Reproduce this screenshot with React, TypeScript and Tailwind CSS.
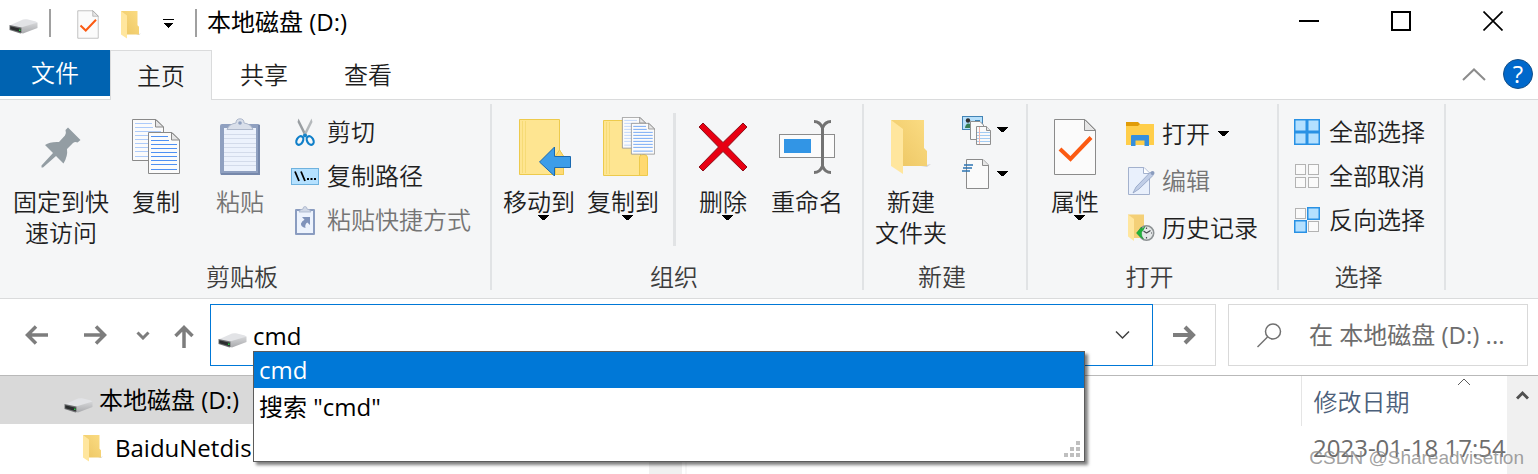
import type { ReactNode } from 'react';

type ChildrenProps = {
  children: ReactNode;
};

type LargeButtonProps = {
  icon: ReactNode;
  lines: string[];
  wide?: boolean;
  menu?: boolean;
  disabled?: boolean;
};

type SmallButtonProps = {
  icon: ReactNode;
  label: string;
  tall?: boolean;
  menu?: boolean;
  disabled?: boolean;
};

/* ---------- Icons ---------- */

function DriveIcon() {
  return (
    <svg width="29" height="17" viewBox="0 0 29 17" className="shrink-0">
      <defs>
        <linearGradient id="driveSide" x1="0" y1="0" x2="0" y2="1">
          <stop offset="0" stopColor="#d6d7d9" />
          <stop offset="1" stopColor="#a9aaad" />
        </linearGradient>
      </defs>
      <path d="M0.500 6.500 L14 0.500 Q16 0 18 0.300 L27 2.500 L28.500 4 L12 9.500 Z" fill="#e2e3e6" />
      <path d="M12 8.500 L28.500 3.500 V9 L14 14.500 L12 14 Z" fill="url(#driveSide)" />
      <path d="M0.500 6 L12.500 8.500 V14 L11.500 14.500 L0.500 11 Z" fill="#6f7173" />
      <path d="M1.300 7.200 L11.800 9.800 V13.300 L1.300 10.300 Z" fill="#2b2d2e" />
      <rect x="10" y="10.500" width="1.500" height="1.500" fill="#27cf45" />
    </svg>
  );
}

function Caret() {
  return (
    <svg width="11" height="6" viewBox="0 0 11 6" className="shrink-0" shapeRendering="crispEdges">
      <path d="M0 0 H11 L6.5 5 H4.5 Z" fill="#000" />
    </svg>
  );
}

function FolderIcon({ width, height }: { width: number; height: number }) {
  return (
    <svg width={width} height={height} viewBox="0 0 40 55" className="shrink-0" preserveAspectRatio="none">
      <defs>
        <linearGradient id="folderBack" x1="0" y1="1" x2="1" y2="0">
          <stop offset="0" stopColor="#ecc562" />
          <stop offset="1" stopColor="#fbdc83" />
        </linearGradient>
      </defs>
      <path d="M30 46 L40 44 L36 47 Z" fill="#d5d5d5" />
      <path d="M0 0 H33 V28 L36 31 V46 H8 Z" fill="url(#folderBack)" />
      <path d="M0 0 L12 9 V54 L0 46 Z" fill="#ffe69e" />
    </svg>
  );
}

function CheckDocIcon({ width, height }: { width: number; height: number }) {
  return (
    <svg width={width} height={height} viewBox="0 0 44 58" className="shrink-0">
      <path d="M1.5 1.5 H32 L42.5 12 V56.5 H1.5 Z" fill="#fbfbfb" stroke="#8b8b8b" />
      <path d="M31.5 1.5 V12.5 H42.5 Z" fill="#e6e6e6" stroke="#8b8b8b" />
      <path d="M7 31 L17.5 41 L38 19.500" fill="none" stroke="#fb5a12" strokeWidth="4" />
    </svg>
  );
}

function PinIcon() {
  return (
    <svg width="40" height="41" viewBox="0 0 40 41">
      <path
        d="M27 0.5 L39.5 13 L36.5 15.5 Q34 14.5 32 16 L26 22 Q27 29 22.5 36.5 L15 29 L2 40.5 H0.5 V38.5 L12 26 L4 18 Q9 14.5 18 15 L24 8.5 Q25.5 6 24.5 3 Z"
        fill="#939da3"
      />
    </svg>
  );
}

function PageLines({ x, y, faded }: { x: number; y: number; faded?: boolean }) {
  const color = faded ? '#adcbfa' : '#4e90f3';
  return (
    <g transform={`translate(${x} ${y})`}>
      <path d="M0.5 0.5 H24 L31.5 8 V41.5 H0.5 Z" fill="#fbfbfb" stroke="#898989" />
      <path d="M23.5 0.5 V8 H31.5 Z" fill="#e6e6e6" stroke="#898989" />
      <path
        d="M3 4.5 H20 M3 8.5 H21 M3 12.5 H29 M3 16.5 H29 M3 20.5 H29 M3 24.5 H29 M3 28.5 H29 M3 32.5 H29 M3 37.5 H29"
        stroke={color}
      />
    </g>
  );
}

function CopyIcon() {
  return (
    <svg width="48" height="58" viewBox="0 -1 48 58">
      <PageLines x={0} y={0} faded />
      <PageLines x={16} y={13} />
    </svg>
  );
}

function PasteIcon() {
  return (
    <svg width="40" height="58" viewBox="0 0 40 58">
      <rect x="0" y="6" width="40" height="51" rx="2" fill="#8fa0c0" />
      <path d="M39 7 V56 H1" fill="none" stroke="#7688ab" strokeWidth="2" />
      <rect x="4" y="10" width="32" height="43" fill="#ecf2fc" />
      <path d="M4 16.500 H36 M4 20.5 H36 M4 25.500 H36 M4 29.5 H36 M4 34.500 H36 M4 38.5 H36 M4 43.500 H36 M4 47.5 H36" stroke="#d3dbea" />
      <path d="M7 11.5 Q9 6 16 5 Q16 0.8 20 0.8 Q24 0.8 24 5 Q31 6 33 11.5 Z" fill="#d9dfea" stroke="#aeb8cb" />
      <circle cx="20" cy="5" r="1.8" fill="#8fa0c0" />
    </svg>
  );
}

function ScissorsIcon() {
  return (
    <svg width="20" height="29" viewBox="0 0 20 29">
      <path d="M3.5 0.5 L12 17.5 L10 19 L2.5 4 Z" fill="#999ea2" />
      <path d="M16.5 0.5 L8 17.5 L10 19 L17.5 4 Z" fill="#b5b9bc" />
      <ellipse cx="4.8" cy="22.5" rx="3.1" ry="4.6" transform="rotate(28 4.8 22.5)" fill="none" stroke="#0f7fc9" strokeWidth="2.2" />
      <ellipse cx="15.2" cy="22.5" rx="3.1" ry="4.6" transform="rotate(-28 15.2 22.5)" fill="none" stroke="#0f7fc9" strokeWidth="2.2" />
      <circle cx="10" cy="17.5" r="2" fill="#1583c8" />
    </svg>
  );
}

function PathIcon() {
  return (
    <svg width="28" height="17" viewBox="0 0 28 17">
      <rect x="0.5" y="0.5" width="27" height="16" fill="#b5e1ff" stroke="#6fb2de" />
      <path d="M4 3.5 L8 13 M10 3.5 L14 13" stroke="#000" strokeWidth="1.8" />
      <path d="M16 10 h2 v2 h-2 Z M19.5 10 h2 v2 h-2 Z M23 10 h2 v2 h-2 Z" fill="#000" />
    </svg>
  );
}

function ShortcutIcon() {
  return (
    <svg width="20" height="29" viewBox="0 0 20 29">
      <rect x="0" y="3" width="20" height="26" rx="1" fill="#8a9cc0" />
      <rect x="2" y="5" width="16" height="22" fill="#edf3fd" />
      <path d="M4 6 Q5 3 8 3 Q8 0.5 10 0.5 Q12 0.5 12 3 Q15 3 16 6 Z" fill="#d0d8e6" stroke="#a7b3c9" strokeWidth="0.8" />
      <path d="M7 11 H15 V19 L12.3 16.5 Q9.5 18.5 10.5 22 Q5.5 20.5 6 17.5 Q7 15 9.5 13.7 Z" fill="#8093bb" />
    </svg>
  );
}

function MoveToIcon() {
  return (
    <svg width="64" height="58" viewBox="-12 -1 64 58">
      <path d="M0.5 0.5 H40.5 V31 L44.5 38 V55.5 H0.5 Z" fill="#fee591" stroke="#edca4c" />
      <path d="M3.5 2 V54 M6.5 2 V54" stroke="#f6db76" />
      <path d="M36.500 55.500 V37 L40.500 31 L44.500 37 V55.500 Z" fill="#ffda75" stroke="#edca4c" />
      <path d="M20.500 43 L35.5 28 V37.5 H51.500 V48.5 H35.5 V57 Z" fill="#3d9de8" stroke="#1a69b0" />
    </svg>
  );
}

function CopyToIcon() {
  return (
    <svg width="64" height="60" viewBox="-12 0 64 60">
      <path d="M0.5 3.5 H37.5 V58.5 H0.5 Z" fill="#fee591" stroke="#edca4c" />
      <path d="M3.5 5 V57 M6.5 5 V57" stroke="#f6db76" />
      <path d="M36.5 58.5 V41 Q36.5 37.5 41 37.5 Q44.5 37.5 44.5 41 V58.5 Z" fill="#ffd970" stroke="#edca4c" />
      <g transform="translate(19 0) scale(0.75)">
        <PageLines x={0} y={0} faded />
      </g>
      <g transform="translate(28 6) scale(0.75)">
        <PageLines x={0} y={0} />
      </g>
    </svg>
  );
}

function DeleteIcon() {
  return (
    <svg width="50" height="50" viewBox="0 0 50 50">
      <path
        d="M5 1 L25 20.5 L45 1 L49 5 L29.5 25 L49 45 L45 49 L25 29.5 L5 49 L1 45 L20.5 25 L1 5 Z"
        fill="#e80012"
        stroke="#8e0d18"
      />
    </svg>
  );
}

function RenameIcon() {
  return (
    <svg width="56" height="54" viewBox="0 0 56 54">
      <rect x="0.5" y="14.5" width="55" height="23" fill="#fbfbfb" stroke="#8c8c8c" />
      <rect x="5" y="19" width="27" height="14" fill="#3295e5" />
      <path
        d="M35 1.500 Q41 1.500 43.500 8 Q46 1.500 52 1.500 M43.500 7 V47 M35 52.500 Q41 52.500 43.500 46 Q46 52.500 52 52.500"
        fill="none"
        stroke="#737373"
        strokeWidth="3"
      />
    </svg>
  );
}

function NewItemIcon() {
  return (
    <svg width="29" height="29" viewBox="0 0 29 29">
      <rect x="0.5" y="0.5" width="20" height="13" fill="#b7e0fb" stroke="#4384b5" />
      <circle cx="6" cy="4.5" r="2.2" fill="#303030" />
      <path d="M3 12 Q3.500 7.500 6.5 7.500 Q9 7.500 9 12 Z" fill="#367e55" />
      <path d="M13 4.500 H18" stroke="#4384b5" />
      <path d="M8.5 5.5 H18 L21.5 9 V23.5 H8.5 Z" fill="#fafafa" stroke="#8f8f8f" />
      <path d="M14.5 10.5 H24.5 L28.5 14.5 V28.5 H14.5 Z" fill="#fafafa" stroke="#8f8f8f" />
      <path d="M24.5 10.5 V14.5 H28.5" fill="#e6e6e6" stroke="#8f8f8f" />
      <path d="M15 16.5 H28 M15 19.5 H28 M15 22.5 H28 M15 25.5 H28" stroke="#a3ccf3" />
      <path d="M17.5 11 V28" stroke="#f2b5ab" />
    </svg>
  );
}

function EasyAccessIcon() {
  return (
    <svg width="29" height="30" viewBox="0 0 29 30">
      <path d="M4.5 0.500 H21 L26.5 6 V29.5 H4.5 Z" fill="#fafafa" stroke="#8b8b8b" />
      <path d="M20.500 0.500 V6.5 H26.5" fill="#e6e6e6" stroke="#8b8b8b" />
      <path d="M2 6 H11 M1 9 H10 M0 12 H8" stroke="#2d74b3" strokeWidth="1.6" />
    </svg>
  );
}

function OpenIcon() {
  return (
    <svg width="28" height="24" viewBox="0 0 28 24">
      <path d="M0 0 H12 L14 2 V6 H0 Z" fill="#e19c08" />
      <path d="M0 4 H12 L14 2 H28 V23 H0 Z" fill="#ffce4a" />
      <path d="M5 14 Q5 13 6 13 H22 Q23 13 23 14 V24 H18.500 V18.500 H9.500 V24 H5 Z" fill="#368fdc" />
    </svg>
  );
}

function EditIcon() {
  return (
    <svg width="30" height="28" viewBox="0 0 30 28" className="shrink-0">
      <path d="M3.500 0.5 H19 L24.500 6 V27.500 H3.500 Z" fill="#e9f0fc" stroke="#a3b1cd" />
      <path d="M18.500 0.5 V6.500 H24.500" fill="#fff" stroke="#a3b1cd" />
      <path d="M25.500 5 L28.500 8 L14 22 L8 26 L11 20 Z" fill="#c0cde6" stroke="#8fa1c3" strokeWidth="0.8" />
      <circle cx="27.500" cy="6" r="2" fill="#8a9cbe" />
    </svg>
  );
}

function HistoryIcon() {
  return (
    <svg width="30" height="28" viewBox="0 0 30 28" className="shrink-0">
      <path d="M3 0.5 H19 V24 H7 Z" fill="#f4d077" />
      <path d="M3 0.5 L9 5 V27 L3 22.500 Z" fill="#ffe69e" />
      <circle cx="21.500" cy="19" r="7.200" fill="#e4e7e8" stroke="#8d9294" strokeWidth="1.600" />
      <path d="M21.500 19 L25.500 16.500 M21.500 19 L18.500 17 M21.500 13.500 V15 M21.500 23 V24.500 M26 19 H27" stroke="#4b4f52" strokeWidth="1.200" />
      <path d="M11.500 19 L16.500 13 V15 Q18.500 14 20 12.500 Q18 17 16.500 18 V19 Q16 22 18.500 25 Q14 22.500 11.500 19 Z" fill="#1fb53c" stroke="#128a2b" strokeWidth="0.500" />
    </svg>
  );
}

function GridIcon({ selected }: { selected: boolean[] }) {
  return (
    <svg width="26" height="26" viewBox="0 0 26 26">
      {selected.map((on, i) => (
        <rect
          key={i}
          x={(i % 2) * 13 + (on ? 0.75 : 1.5)}
          y={Math.floor(i / 2) * 13 + (on ? 0.75 : 1.5)}
          width={on ? 11.5 : 10}
          height={on ? 11.5 : 10}
          fill={on ? '#b4e0ff' : '#fafafa'}
          stroke={on ? '#2991e4' : '#b3b3b3'}
          strokeWidth={on ? 1.5 : 1}
        />
      ))}
    </svg>
  );
}

/* ---------- Ribbon parts ---------- */

function LargeButton({ icon, lines, wide, menu, disabled }: LargeButtonProps) {
  return (
    <button
      type="button"
      disabled={disabled}
      className={`flex flex-col items-center pt-[18px] ${wide ? 'w-[106px]' : 'w-[84px]'} ${disabled ? 'text-[#757575]' : 'text-[#1f1f1f]'}`}
    >
      <span className="mb-3 flex h-[58px] items-center justify-center">{icon}</span>
      {lines.map((line) => (
        <span key={line} className="mb-[3px] leading-7 whitespace-nowrap last:mb-0">
          {line}
        </span>
      ))}
      {menu && (
        <span className="-mt-1 pl-2">
          <Caret />
        </span>
      )}
    </button>
  );
}

function SmallButton({ icon, label, tall, menu, disabled }: SmallButtonProps) {
  return (
    <button
      type="button"
      disabled={disabled}
      className={`flex items-center gap-2 leading-7 whitespace-nowrap ${tall ? 'h-[47px]' : 'h-11'} ${disabled ? 'text-[#757575]' : 'text-[#1f1f1f]'}`}
    >
      <span className="flex w-7 justify-center">{icon}</span>
      {label}
      {menu && <Caret />}
    </button>
  );
}

function Group({ label, children }: ChildrenProps & { label: string }) {
  return (
    <section className="flex flex-col pb-[7px]">
      <div className="flex h-[163px]">{children}</div>
      <h2 className="pr-1.5 text-center leading-7 text-[#3d3d3d]">{label}</h2>
    </section>
  );
}

function Divider() {
  return <div className="mt-1 mb-2 w-0.5 bg-[#e1e3e5]" />;
}

/* ---------- Window sections ---------- */

function TitleBar() {
  return (
    <header className="flex h-[50px] items-start text-black">
      <div className="flex h-[46px] items-center pl-[9px]">
        <span className="pt-2">
          <DriveIcon />
        </span>
        <span className="ml-[11px] h-7 w-0.5 bg-[#a0a0a0]" />
        <button type="button" aria-label="属性" className="ml-[26px] pt-0.5">
          <CheckDocIcon width={22} height={29} />
        </button>
        <button type="button" aria-label="新建文件夹" className="ml-[22px] pt-1">
          <FolderIcon width={20} height={28} />
        </button>
        <button type="button" aria-label="自定义快速访问工具栏" className="ml-[22px]">
          <svg width="11" height="9" viewBox="0 0 11 9" shapeRendering="crispEdges">
            <path d="M0 0 H11 V1 H0 Z M1 4 H10 L6 8.500 H5 Z" fill="#000" />
          </svg>
        </button>
        <span className="ml-[21px] h-7 w-0.5 bg-[#a0a0a0]" />
        <h1 className="ml-2.5 pb-0.5 leading-7">本地磁盘 (D:)</h1>
      </div>
      <div className="ml-auto flex h-[42px] items-center gap-[72px] pr-[35px]">
        <button type="button" aria-label="最小化">
          <svg width="20" height="20" viewBox="0 0 20 20">
            <path d="M0 10 H20" stroke="#000" strokeWidth="2" />
          </svg>
        </button>
        <button type="button" aria-label="最大化">
          <svg width="20" height="20" viewBox="0 0 20 20">
            <rect x="1" y="1" width="18" height="18" fill="none" stroke="#000" strokeWidth="2" />
          </svg>
        </button>
        <button type="button" aria-label="关闭">
          <svg width="20" height="20" viewBox="0 0 20 20">
            <path d="M0.500 0.500 L19.500 19.500 M19.500 0.500 L0.500 19.500" stroke="#000" strokeWidth="1.700" />
          </svg>
        </button>
      </div>
    </header>
  );
}

function TabBar() {
  return (
    <nav className="flex h-[50px] border-b border-[#dadbdc] leading-7 font-[350] text-[#1f1f1f]">
      <button type="button" className="h-[46px] w-[110px] bg-[#0063b1] text-white">
        文件
      </button>
      <button type="button" className="-mb-px border border-b-0 border-[#dadbdc] bg-[#f5f6f7] px-[26px]">
        主页
      </button>
      <button type="button" className="px-7">
        共享
      </button>
      <button type="button" className="px-7">
        查看
      </button>
      <div className="ml-auto flex items-center gap-[17px] pr-[5px] pb-px">
        <button type="button" aria-label="最小化功能区">
          <svg width="24" height="13" viewBox="0 0 24 13">
            <path d="M1 12 L12 1.500 L23 12" fill="none" stroke="#8c8c8c" strokeWidth="2" />
          </svg>
        </button>
        <button
          type="button"
          aria-label="帮助"
          className="flex size-[30px] items-center justify-center rounded-full border border-[#144f88] bg-[#0068cb] font-normal text-white"
        >
          ?
        </button>
      </div>
    </nav>
  );
}

function Ribbon() {
  return (
    <div className="flex border-b border-[#dadbdc] bg-[#f5f6f7] font-[350]">
      <Group label="剪贴板">
        <div className="flex pl-2">
          <LargeButton wide icon={<PinIcon />} lines={['固定到快', '速访问']} />
          <LargeButton icon={<CopyIcon />} lines={['复制']} />
          <LargeButton disabled icon={<PasteIcon />} lines={['粘贴']} />
        </div>
        <div className="pt-2.5 pr-[19px] pl-[9px]">
          <SmallButton icon={<ScissorsIcon />} label="剪切" />
          <SmallButton icon={<PathIcon />} label="复制路径" />
          <SmallButton disabled icon={<ShortcutIcon />} label="粘贴快捷方式" />
        </div>
      </Group>
      <Divider />
      <Group label="组织">
        <div className="flex pr-2 pl-[5px]">
          <LargeButton menu icon={<MoveToIcon />} lines={['移动到']} />
          <LargeButton menu icon={<CopyToIcon />} lines={['复制到']} />
        </div>
        <div className="mt-[13px] mb-[17px] w-[3px] bg-[#e1e3e5]" />
        <div className="flex pr-[13px] pl-[5px]">
          <LargeButton menu icon={<DeleteIcon />} lines={['删除']} />
          <LargeButton icon={<RenameIcon />} lines={['重命名']} />
        </div>
      </Group>
      <Divider />
      <Group label="新建">
        <div className="pl-[5px]">
          <LargeButton icon={<FolderIcon width={40} height={55} />} lines={['新建', '文件夹']} />
        </div>
        <div className="pt-2 pr-[18px] pl-[9px]">
          <button type="button" aria-label="新建项目" className="flex h-11 items-center gap-1.5">
            <NewItemIcon />
            <Caret />
          </button>
          <button type="button" aria-label="轻松访问" className="flex h-11 items-center gap-1.5">
            <EasyAccessIcon />
            <Caret />
          </button>
        </div>
      </Group>
      <Divider />
      <Group label="打开">
        <div className="pl-[5px]">
          <LargeButton menu icon={<CheckDocIcon width={44} height={58} />} lines={['属性']} />
        </div>
        <div className="pt-2.5 pr-[19px] pl-[9px]">
          <SmallButton tall menu icon={<OpenIcon />} label="打开" />
          <SmallButton tall disabled icon={<EditIcon />} label="编辑" />
          <SmallButton tall icon={<HistoryIcon />} label="历史记录" />
        </div>
      </Group>
      <Divider />
      <Group label="选择">
        <div className="pt-2.5 pr-[19px] pl-3.5">
          <SmallButton icon={<GridIcon selected={[true, true, true, true]} />} label="全部选择" />
          <SmallButton icon={<GridIcon selected={[false, false, false, false]} />} label="全部取消" />
          <SmallButton icon={<GridIcon selected={[false, true, true, false]} />} label="反向选择" />
        </div>
      </Group>
      <Divider />
    </div>
  );
}

function Suggestions() {
  return (
    <div className="absolute top-[46px] right-[67px] left-[42px] z-10 h-[111px] border border-[#5c5c5c] bg-white shadow-[3px_3px_3px_rgba(0,0,0,0.5)]">
      <ul role="listbox" aria-label="建议">
        <li role="option" aria-selected="true" className="bg-[#0078d7] px-[5px] leading-9 text-white">
          cmd
        </li>
        <li role="option" aria-selected="false" className="px-[5px] leading-[38px]">
          搜索 "cmd"
        </li>
      </ul>
      <svg width="16" height="16" viewBox="0 0 16 16" className="absolute right-1 bottom-1">
        <path
          d="M12 0 h4 v4 h-4 Z M6 6 h4 v4 h-4 Z M12 6 h4 v4 h-4 Z M0 12 h4 v4 h-4 Z M6 12 h4 v4 h-4 Z M12 12 h4 v4 h-4 Z"
          fill="#bfbfbf"
        />
      </svg>
    </div>
  );
}

function AddressBar() {
  return (
    <div className="flex border-b border-[#b9b9b9] pt-[5px] pr-2.5 pb-[9px]">
      <div className="flex w-[210px] items-center pl-[25px]">
        <button type="button" aria-label="后退">
          <svg width="24" height="20" viewBox="0 0 24 20">
            <path d="M23 10 H3 M11 1.500 L2.500 10 L11 18.500" fill="none" stroke="#7d7d7d" strokeWidth="3.500" />
          </svg>
        </button>
        <button type="button" aria-label="前进" className="ml-[34px]">
          <svg width="24" height="20" viewBox="0 0 24 20">
            <path d="M1 10 H21 M13 1.500 L21.500 10 L13 18.500" fill="none" stroke="#7d7d7d" strokeWidth="3.500" />
          </svg>
        </button>
        <button type="button" aria-label="最近浏览的位置" className="ml-[29px]">
          <svg width="14" height="9" viewBox="0 0 14 9">
            <path d="M1.500 1.500 L7 7 L12.500 1.500" fill="none" stroke="#7d7d7d" strokeWidth="3" />
          </svg>
        </button>
        <button type="button" aria-label="上移" className="ml-6 pt-1">
          <svg width="20" height="24" viewBox="0 0 20 24">
            <path d="M10 23 V3 M1.500 11 L10 2.500 L18.500 11" fill="none" stroke="#7d7d7d" strokeWidth="3.500" />
          </svg>
        </button>
      </div>
      <div className="relative flex h-[62px] flex-1 items-center border border-[#0078d7] pr-[22px] pl-[7px]">
        <span className="pt-3">
          <DriveIcon />
        </span>
        <input aria-label="地址" defaultValue="cmd" className="ml-1.5 min-w-0 flex-1 pt-0.5 leading-8 outline-none" />
        <button type="button" aria-label="上一个位置">
          <svg width="15" height="10" viewBox="0 0 15 10">
            <path d="M1 1.500 L7.500 8 L14 1.500" fill="none" stroke="#404040" strokeWidth="1.500" />
          </svg>
        </button>
        <Suggestions />
      </div>
      <button type="button" aria-label="转到" className="flex w-[63px] items-center justify-center border border-l-0 border-[#d9d9d9]">
        <svg width="24" height="20" viewBox="0 0 24 20">
          <path d="M1 10 H21 M13 2 L21 10 L13 18" fill="none" stroke="#7d7d7d" strokeWidth="4" />
        </svg>
      </button>
      <label className="ml-3 flex w-[300px] items-center border border-[#d9d9d9] pl-7">
        <svg width="25" height="25" viewBox="0 0 25 25" className="shrink-0">
          <circle cx="16" cy="8.500" r="7.500" fill="none" stroke="#707070" strokeWidth="1.500" />
          <path d="M10.500 14 L0.500 24" stroke="#707070" strokeWidth="1.500" />
        </svg>
        <input
          type="search"
          aria-label="搜索"
          placeholder="在 本地磁盘 (D:) ..."
          className="ml-[27px] min-w-0 flex-1 leading-8 outline-none placeholder:text-[#6d6d6d]"
        />
      </label>
    </div>
  );
}

function Content() {
  return (
    <main className="relative flex">
      <ul className="w-[649px] leading-[48px]">
        <li className="flex items-center gap-1.5 bg-[#d9d9d9] pl-16">
          <span className="pt-3">
            <DriveIcon />
          </span>
          本地磁盘 (D:)
        </li>
        <li className="flex items-center gap-3 pl-[83px]">
          <FolderIcon width={20} height={27} />
          BaiduNetdisk
        </li>
      </ul>
      <div className="w-[33px] bg-[#f0f0f0]" />
      <div className="ml-[3px] w-0.5 bg-[#f7f7f7]" />
      <div className="relative min-w-0 flex-1 overflow-hidden">
        <table className="w-full table-fixed border-collapse text-left">
          <thead>
            <tr>
              <th aria-label="名称" />
              <th className="h-[50px] w-[206px] border-l border-[#e5e5e5] p-0 pt-0.5 pl-3 leading-7 font-[350] text-[#4c607a]">
                修改日期
              </th>
            </tr>
          </thead>
          <tbody>
            <tr>
              <td />
              <td className="overflow-hidden p-0 pb-1 pl-3 leading-[44px] whitespace-nowrap text-[#6d6d6d]">2023-01-18 17:54</td>
            </tr>
          </tbody>
        </table>
        <svg width="14" height="8" viewBox="0 0 14 8" className="absolute top-0.5 right-9">
          <path d="M1 7 L7 1 L13 7" fill="none" stroke="#5c5c5c" />
        </svg>
      </div>
      <div className="flex w-[31px] justify-center bg-[#f0f0f0] pt-3.5">
        <svg width="13" height="10" viewBox="0 0 13 10">
          <path d="M1 8.500 L6.500 3 L12 8.500" fill="none" stroke="#505050" strokeWidth="3" />
        </svg>
      </div>
      <p className="absolute right-3.5 bottom-1 font-['Liberation_Sans'] text-[19px] leading-6 text-[#888]/80">
        CSDN @Shareadvisetion
      </p>
    </main>
  );
}

export default function App() {
  return (
    <div className="overflow-hidden bg-white font-['Open_Sans','Noto_Sans_CJK_SC',sans-serif] text-2xl text-black">
      <TitleBar />
      <TabBar />
      <Ribbon />
      <AddressBar />
      <Content />
    </div>
  );
}
